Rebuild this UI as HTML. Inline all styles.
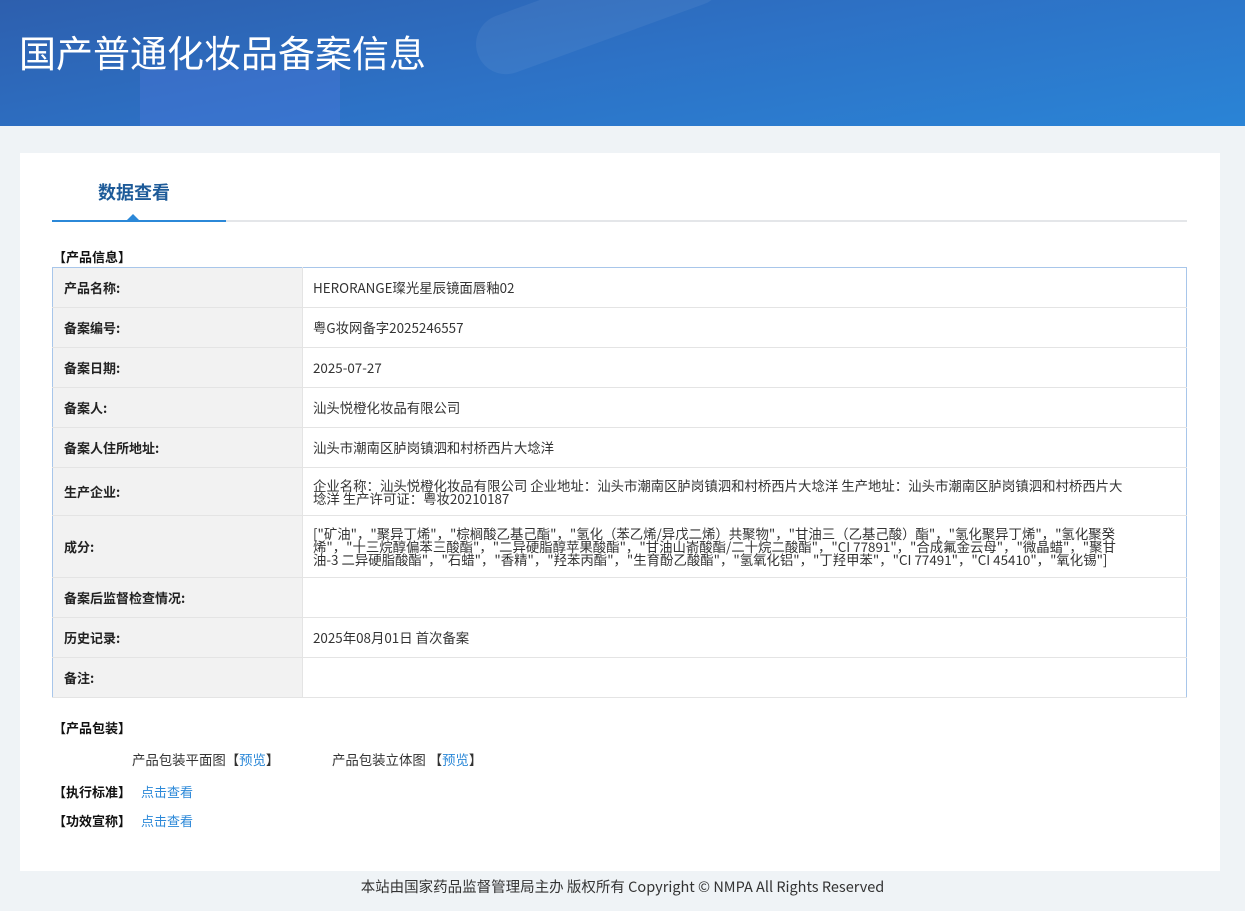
<!DOCTYPE html>
<html><head><meta charset="utf-8"><style>
*{margin:0;padding:0;box-sizing:border-box}
body{width:1245px;height:911px;background:#eff3f6;font-family:"Noto Sans CJK SC","Liberation Sans",sans-serif;color:#333;font-size:13px;position:relative;overflow:hidden}
.hdr{position:absolute;left:0;top:0;width:1245px;height:126px;background:linear-gradient(170deg,#2d5fae 0%,#2d72c6 50%,#2a84d6 100%);overflow:hidden}
.hdr h1{position:absolute;left:19px;top:26px;color:#fff;font-weight:normal;font-size:37px;line-height:50px;font-family:"Noto Sans CJK SC",sans-serif}
.card{position:absolute;left:20px;top:153px;width:1200px;height:718px;background:#fff}
.tab{position:absolute;left:78px;top:26px;color:#1e5b99;font-weight:bold;font-size:18px}
.line{position:absolute;left:32px;top:67px;width:1135px;height:2px;background:#e4e6e9}
.line i{position:absolute;left:0;top:0;width:174px;height:2px;background:#2b88d8}
.tri{position:absolute;left:107px;top:61px;border:6px solid transparent;border-bottom-color:#2b88d8;border-top:0}
.sec{position:absolute;left:33px;font-weight:bold;font-size:13px;color:#111;line-height:16px}
table{position:absolute;left:32px;top:114px;width:1135px;border-collapse:collapse;border:1px solid #a8c6ea}
td{border-bottom:1px solid #e4e4e4;font-size:13px;vertical-align:middle;line-height:13px}
td.l{width:250px;background:#f2f2f2;font-weight:bold;padding-left:11px;color:#222;border-right:1px solid #e4e4e4}
td.v{padding:0 62px 0 10px;color:#333;font-size:13.4px}
a{color:#2b88d8;text-decoration:none}
.foot{position:absolute;top:876px;left:0;width:1245px;text-align:center;font-size:14.5px;color:#333}
</style></head><body>
<div class="hdr">
<div style="position:absolute;left:140px;top:70px;width:200px;height:60px;background:rgba(80,120,220,.35)"></div>
<div style="position:absolute;left:470px;top:-20px;width:260px;height:60px;border-radius:30px;background:rgba(255,255,255,.06);transform:rotate(-20deg)"></div>
<h1>国产普通化妆品备案信息</h1></div>
<div class="card">
<div class="tab">数据查看</div>
<div class="line"><i></i></div><div class="tri"></div>
<div class="sec" style="top:96px">【产品信息】</div>
<table>
<tr style="height:40px"><td class="l">产品名称:</td><td class="v">HERORANGE璨光星辰镜面唇釉02</td></tr>
<tr style="height:40px"><td class="l">备案编号:</td><td class="v">粤G妆网备字2025246557</td></tr>
<tr style="height:40px"><td class="l">备案日期:</td><td class="v">2025-07-27</td></tr>
<tr style="height:40px"><td class="l">备案人:</td><td class="v">汕头悦橙化妆品有限公司</td></tr>
<tr style="height:40px"><td class="l">备案人住所地址:</td><td class="v">汕头市潮南区胪岗镇泗和村桥西片大埝洋</td></tr>
<tr style="height:48px"><td class="l">生产企业:</td><td class="v">企业名称：汕头悦橙化妆品有限公司 企业地址：汕头市潮南区胪岗镇泗和村桥西片大埝洋 生产地址：汕头市潮南区胪岗镇泗和村桥西片大埝洋 生产许可证：粤妆20210187</td></tr>
<tr style="height:62px"><td class="l">成分:</td><td class="v">["矿油"，"聚异丁烯"，"棕榈酸乙基己酯"，"氢化（苯乙烯/异戊二烯）共聚物"，"甘油三（乙基己酸）酯"，"氢化聚异丁烯"，"氢化聚癸烯"，"十三烷醇偏苯三酸酯"，"二异硬脂醇苹果酸酯"，"甘油山嵛酸酯/二十烷二酸酯"，"CI 77891"，"合成氟金云母"，"微晶蜡"，"聚甘油-3 二异硬脂酸酯"，"石蜡"，"香精"，"羟苯丙酯"，"生育酚乙酸酯"，"氢氧化铝"，"丁羟甲苯"，"CI 77491"，"CI 45410"，"氧化锡"]</td></tr>
<tr style="height:40px"><td class="l">备案后监督检查情况:</td><td class="v"></td></tr>
<tr style="height:40px"><td class="l">历史记录:</td><td class="v">2025年08月01日 首次备案</td></tr>
<tr style="height:40px"><td class="l">备注:</td><td class="v"></td></tr>
</table>
<div class="sec" style="top:567px">【产品包装】</div>
<div style="position:absolute;left:112px;top:596px;font-size:13.4px">产品包装平面图【<a>预览</a>】</div>
<div style="position:absolute;left:312px;top:596px;font-size:13.4px">产品包装立体图 【<a>预览</a>】</div>
<div class="sec" style="top:631px">【执行标准】 <a style="font-weight:normal;margin-left:7px">点击查看</a></div>
<div class="sec" style="top:660px">【功效宣称】 <a style="font-weight:normal;margin-left:7px">点击查看</a></div>
</div>
<div class="foot">本站由国家药品监督管理局主办 版权所有 Copyright © NMPA All Rights Reserved</div>
</body></html>
